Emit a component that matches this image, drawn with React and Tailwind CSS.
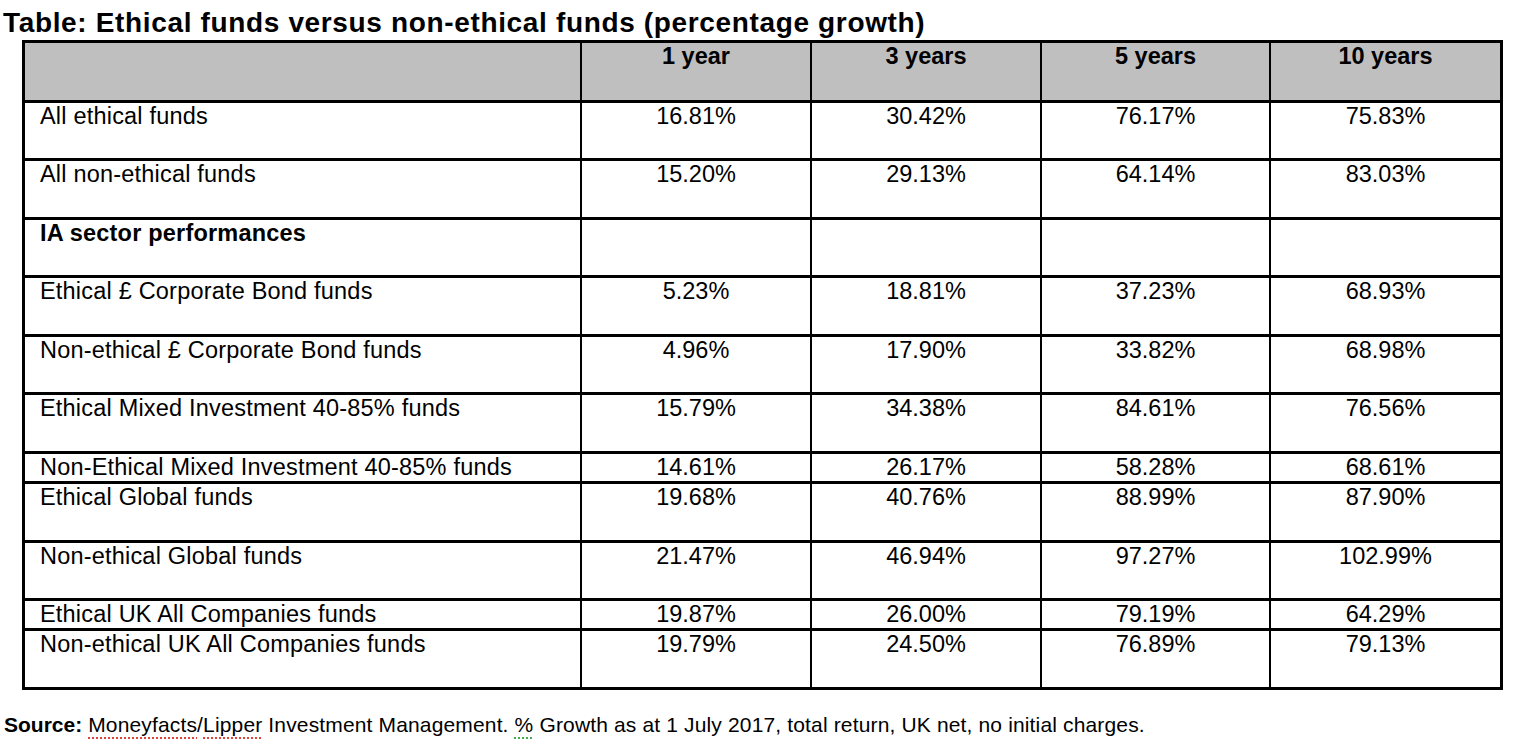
import React from 'react';

const columns = ['1 year', '3 years', '5 years', '10 years'];

// h = cell height incl. its 3px bottom rule
const rows = [
  { label: 'All ethical funds', values: ['16.81%', '30.42%', '76.17%', '75.83%'], h: 'h-[58px]' },
  { label: 'All non-ethical funds', values: ['15.20%', '29.13%', '64.14%', '83.03%'], h: 'h-[59px]' },
  { label: 'IA sector performances', values: ['', '', '', ''], h: 'h-[58px]', bold: true },
  { label: 'Ethical £ Corporate Bond funds', values: ['5.23%', '18.81%', '37.23%', '68.93%'], h: 'h-[59px]' },
  { label: 'Non-ethical £ Corporate Bond funds', values: ['4.96%', '17.90%', '33.82%', '68.98%'], h: 'h-[58px]' },
  { label: 'Ethical Mixed Investment 40-85% funds', values: ['15.79%', '34.38%', '84.61%', '76.56%'], h: 'h-[59px]' },
  { label: 'Non-Ethical Mixed Investment 40-85% funds', values: ['14.61%', '26.17%', '58.28%', '68.61%'], h: 'h-[30px]' },
  { label: 'Ethical Global funds', values: ['19.68%', '40.76%', '88.99%', '87.90%'], h: 'h-[59px]' },
  { label: 'Non-ethical Global funds', values: ['21.47%', '46.94%', '97.27%', '102.99%'], h: 'h-[58px]' },
  { label: 'Ethical UK All Companies funds', values: ['19.87%', '26.00%', '79.19%', '64.29%'], h: 'h-[30px]' },
  { label: 'Non-ethical UK All Companies funds', values: ['19.79%', '24.50%', '76.89%', '79.13%'], h: 'h-[59px]' },
];

const App = () => {
  return (
    <div className="min-h-[744px] w-[1526px] bg-white text-black font-['Liberation_Sans',Arial,sans-serif]">
      {/* Title */}
      <h1 className="h-[40px] pt-[6px] pl-[3px] text-[28px] leading-[34px] font-bold tracking-[0.65px]">
        Table: Ethical funds versus non-ethical funds (percentage growth)
      </h1>

      {/* Table */}
      <div className="ml-[22px] w-fit grid grid-cols-[557px_230px_230px_229px_232px] border-t-[3px] border-l-[3px] border-black text-[23.5px] leading-[27px]">
        <div className="h-[60px] bg-[#bfbfbf] border-r-2 border-b-[3px] border-black" />
        {columns.map((c, idx) => (
          <div
            key={c}
            className={`h-[60px] bg-[#bfbfbf] border-b-[3px] border-black text-center font-bold ${
              idx === columns.length - 1 ? 'border-r-[3px]' : 'border-r-2'
            }`}
          >
            {c}
          </div>
        ))}

        {rows.map((r) => (
          <React.Fragment key={r.label}>
            <div className={`${r.h} pl-[15px] border-r-2 border-b-[3px] border-black whitespace-nowrap tracking-[0.2px] ${r.bold ? 'font-bold' : ''}`}>
              {r.label}
            </div>
            {r.values.map((v, idx) => (
              <div
                key={idx}
                className={`${r.h} border-b-[3px] border-black text-center ${
                  idx === r.values.length - 1 ? 'border-r-[3px]' : 'border-r-2'
                }`}
              >
                {v}
              </div>
            ))}
          </React.Fragment>
        ))}
      </div>

      {/* Source note */}
      <p className="mt-[23px] pl-[4px] text-[21px] leading-[24px] whitespace-nowrap tracking-[0.15px]">
        <span className="font-bold tracking-normal">Source:</span>{' '}
        <span className="underline decoration-dotted decoration-[#e0413a] decoration-2 underline-offset-[5px]">Moneyfacts</span>/
        <span className="underline decoration-dotted decoration-[#e0413a] decoration-2 underline-offset-[5px]">Lipper</span> Investment Management.{' '}
        <span className="underline decoration-dotted decoration-[#3fae49] decoration-2 underline-offset-[5px]">%</span> Growth as at 1 July 2017, total return, UK net, no initial charges.
      </p>
    </div>
  );
};

export default App;
